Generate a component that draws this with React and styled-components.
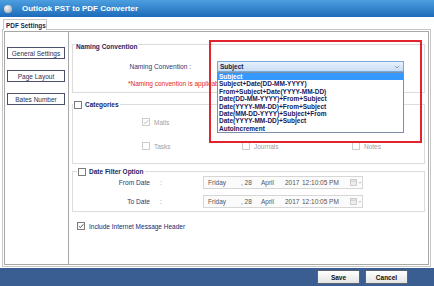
import React from 'react';
import styled, { createGlobalStyle } from 'styled-components';

const Global = createGlobalStyle`
  html, body { margin: 0; padding: 0; background: #fff; }
  body { font-family: "Liberation Sans", Arial, sans-serif; }
  * { box-sizing: border-box; }
`;

const Window = styled.div`
  position: relative;
  width: 434px;
  height: 286px;
  display: flex;
  flex-direction: column;
  overflow: hidden;
  background: #fff;
`;

const TitleBar = styled.div`
  height: 17px;
  flex: none;
  display: flex;
  align-items: center;
  gap: 10px;
  padding-left: 4px;
  background: linear-gradient(#4c9fe0, #1d6bb9);
  color: #fff;
  font-weight: bold;
  font-size: 8px;
`;

const AppIcon = styled.span`
  width: 8px;
  height: 8px;
  border-radius: 50%;
  background: radial-gradient(circle at 35% 35%, #f4f4f4, #9aa4ae);
`;

const Body = styled.div`
  flex: 1;
  display: flex;
  flex-direction: column;
  padding: 2px 3px 1px 2px;
`;

const TabStrip = styled.div`
  display: flex;
  padding-left: 1px;
  height: 11px;
  position: relative;
  z-index: 1;
  margin-bottom: -1px;
`;

const Tab = styled.div`
  width: 44px;
  height: 11px;
  border: 1px solid #c6c6c6;
  border-bottom: none;
  background: #fff;
  font-size: 6.4px;
  font-weight: bold;
  color: #1c2560;
  display: flex;
  align-items: center;
  padding-left: 2px;
`;

const TabPage = styled.div`
  flex: 1;
  border: 1px solid #c6c6c6;
  padding: 1px;
  display: flex;
`;

const Panel = styled.div`
  flex: 1;
  border: 1px solid #a8a8a8;
  display: flex;
`;

const Sidebar = styled.div`
  width: 64px;
  border-right: 1px solid #a8a8a8;
  display: flex;
  flex-direction: column;
  gap: 11px;
  padding: 15px 0 0 2px;
`;

const SideButton = styled.div`
  width: 58px;
  height: 12px;
  border: 1px solid #4a4f6a;
  background: #fff;
  font-size: 6.5px;
  color: #2c3050;
  display: flex;
  align-items: center;
  justify-content: center;
`;

const Content = styled.div`
  flex: 1;
  display: flex;
  flex-direction: column;
  padding: 8px 3px 0 3px;
`;

const Group = styled.fieldset`
  margin: ${p => p.$mt}px 0 0 0;
  padding: ${p => p.$pt}px 0 ${p => p.$pb}px 0;
  border: 1px solid #dcdcdc;
  min-width: 0;
`;

const Legend = styled.legend`
  padding: 0 1px;
  margin-left: ${p => p.$ml}px;
  height: 8px;
  line-height: 8px;
`;

const LegendInner = styled.span`
  display: inline-flex;
  align-items: center;
  gap: ${p => p.$gap || 0}px;
  height: 8px;
  font-size: 6.5px;
  font-weight: bold;
  color: #1d2566;
`;

const NamingRow = styled.div`
  display: flex;
  align-items: center;
  height: 11px;
  padding-left: 54px;
  gap: 26px;
`;

const FieldLabel = styled.span`
  width: ${p => p.$w}px;
  text-align: right;
  font-size: 6.6px;
  color: #2f3570;
  white-space: nowrap;
`;

const SelectWrap = styled.div`
  position: relative;
  width: 187px;
  height: 11px;
`;

const SelectBox = styled.div`
  height: 11px;
  border: 1px solid #7ba8da;
  background: linear-gradient(#e7f1fc, #c7ddf5);
  display: flex;
  align-items: center;
  justify-content: space-between;
  padding: 0 3px 0 2px;
  font-size: 6.5px;
  font-weight: bold;
  color: #18204e;
`;

const DropList = styled.ul`
  position: absolute;
  top: 100%;
  left: 0;
  width: 187px;
  margin: 0;
  padding: 0;
  list-style: none;
  background: #fff;
  border: 1px solid #7d90ab;
  z-index: 5;
`;

const DropItem = styled.li`
  height: 7.4px;
  line-height: 7.4px;
  padding-left: 1px;
  font-size: 6.5px;
  font-weight: bold;
  white-space: nowrap;
  color: ${p => (p.$active ? '#fff' : '#16205a')};
  background: ${p => (p.$active ? '#3399ff' : 'transparent')};
`;

const Note = styled.div`
  margin-top: 8px;
  height: 8px;
  line-height: 8px;
  padding-left: 55px;
  font-size: 6.5px;
  color: #e2231d;
  white-space: nowrap;
`;

const CatGrid = styled.div`
  display: grid;
  grid-template-columns: 100px 110px 1fr;
  grid-auto-rows: 8px;
  row-gap: 16px;
  padding-left: 69px;
`;

const CatItem = styled.div`
  grid-column: ${p => p.$col};
  grid-row: ${p => p.$row};
  display: flex;
  align-items: center;
  gap: 4px;
  font-size: 6.5px;
  color: #a0a0a0;
`;

const Box = styled.span`
  width: 8px;
  height: 8px;
  flex: none;
  border: 1px solid ${p => (p.$disabled ? '#cdcdcd' : '#7c7c7c')};
  background: #fff;
  display: inline-flex;
  align-items: center;
  justify-content: center;
`;

const DateRows = styled.div`
  display: flex;
  flex-direction: column;
  gap: 6px;
`;

const DateRow = styled.div`
  display: grid;
  grid-template-columns: 40px 53px 160px;
  align-items: center;
  height: 13px;
  padding-left: 37px;
`;

const Colon = styled.span`
  padding-left: 10px;
  font-size: 6.5px;
  color: #8a8aa0;
`;

const DateBox = styled.div`
  height: 13px;
  border: 1px solid #d6d6d6;
  background: #fbfbfb;
  display: flex;
  align-items: center;
  padding-left: 4px;
  font-size: 6.5px;
  color: #555;
`;

const DateSeg = styled.span`
  width: ${p => p.$w}px;
  flex: none;
  white-space: nowrap;
`;

const IncludeRow = styled.div`
  margin-top: 10px;
  height: 8px;
  padding-left: 5px;
  display: flex;
  align-items: center;
  gap: 4px;
  font-size: 6.5px;
  color: #1d2566;
`;

const Footer = styled.div`
  height: 18px;
  flex: none;
  background: #3a5e91;
  display: flex;
  align-items: center;
  justify-content: flex-end;
  gap: 5px;
  padding-right: 26px;
`;

const FootButton = styled.div`
  width: 43px;
  height: 14px;
  border: 1px solid #5d6470;
  background: linear-gradient(#ffffff, #e4e4e4);
  font-size: 6.5px;
  font-weight: bold;
  color: #111;
  display: flex;
  align-items: center;
  justify-content: center;
`;

const RedBox = styled.div`
  position: absolute;
  left: 209px;
  top: 40px;
  width: 213px;
  height: 103px;
  border: 2px solid #e2242e;
  pointer-events: none;
  z-index: 6;
`;

const Check = ({ color }) => (
  <svg width="6" height="6" viewBox="0 0 6 6">
    <path d="M0.8 3.1 L2.4 4.6 L5.3 1.2" fill="none" stroke={color} strokeWidth="0.9" />
  </svg>
);

const CheckBox = ({ checked, disabled }) => (
  <Box $disabled={disabled}>{checked && <Check color={disabled ? '#b5b5b5' : '#4a4a4a'} />}</Box>
);

const Chevron = () => (
  <svg width="6" height="4" viewBox="0 0 6 4">
    <path d="M0.8 0.8 L3 3 L5.2 0.8" fill="none" stroke="#8a8a8a" strokeWidth="0.8" />
  </svg>
);

const CalIcon = () => (
  <svg width="12" height="7" viewBox="0 0 12 7">
    <rect x="0.5" y="0.5" width="6" height="6" fill="#eee" stroke="#c4c4c4" strokeWidth="0.8" />
    <line x1="0.5" y1="2.2" x2="6.5" y2="2.2" stroke="#c4c4c4" strokeWidth="0.8" />
    <path d="M8.6 3 L9.8 4.3 L11 3" fill="none" stroke="#aaa" strokeWidth="0.7" />
  </svg>
);

const options = [
  'Subject',
  'Subject+Date(DD-MM-YYYY)',
  'From+Subject+Date(YYYY-MM-DD)',
  'Date(DD-MM-YYYY)+From+Subject',
  'Date(YYYY-MM-DD)+From+Subject',
  'Date(MM-DD-YYYY)+Subject+From',
  'Date(YYYY-MM-DD)+Subject',
  'AutoIncrement',
];

const DateValue = () => (
  <DateBox>
    <DateSeg $w={33}>Friday</DateSeg>
    <DateSeg $w={20}>, 28</DateSeg>
    <DateSeg $w={24}>April</DateSeg>
    <DateSeg $w={17}>2017</DateSeg>
    <DateSeg $w={48}>12:10:05 PM</DateSeg>
    <CalIcon />
  </DateBox>
);

export default function App() {
  return (
    <>
      <Global />
      <Window>
        <TitleBar>
          <AppIcon />
          Outlook PST to PDF Converter
        </TitleBar>
        <Body>
          <TabStrip>
            <Tab>PDF Settings</Tab>
          </TabStrip>
          <TabPage>
            <Panel>
              <Sidebar>
                <SideButton>General Settings</SideButton>
                <SideButton>Page Layout</SideButton>
                <SideButton>Bates Number</SideButton>
              </Sidebar>
              <Content>
                <Group $mt={0} $pt={13} $pb={4}>
                  <Legend $ml={2}>
                    <LegendInner>Naming Convention</LegendInner>
                  </Legend>
                  <NamingRow>
                    <FieldLabel $w={64}>Naming Convention :</FieldLabel>
                    <SelectWrap>
                      <SelectBox>
                        Subject
                        <Chevron />
                      </SelectBox>
                      <DropList>
                        {options.map((o, i) => (
                          <DropItem key={o} $active={i === 0}>{o}</DropItem>
                        ))}
                      </DropList>
                    </SelectWrap>
                  </NamingRow>
                  <Note>*Naming convention is applicable</Note>
                </Group>

                <Group $mt={7} $pt={10} $pb={13}>
                  <Legend $ml={0}>
                    <LegendInner $gap={3}>
                      <CheckBox />
                      Categories
                    </LegendInner>
                  </Legend>
                  <CatGrid>
                    <CatItem $col={1} $row={1}><CheckBox checked disabled />Mails</CatItem>
                    <CatItem $col={1} $row={2}><CheckBox disabled />Tasks</CatItem>
                    <CatItem $col={2} $row={2}><CheckBox disabled />Journals</CatItem>
                    <CatItem $col={3} $row={2}><CheckBox disabled />Notes</CatItem>
                  </CatGrid>
                </Group>

                <Group $mt={3} $pt={1} $pb={3}>
                  <Legend $ml={4}>
                    <LegendInner $gap={3}>
                      <CheckBox />
                      Date Filter Option
                    </LegendInner>
                  </Legend>
                  <DateRows>
                    <DateRow>
                      <FieldLabel $w={40}>From Date</FieldLabel>
                      <Colon>:</Colon>
                      <DateValue />
                    </DateRow>
                    <DateRow>
                      <FieldLabel $w={40}>To Date</FieldLabel>
                      <Colon>:</Colon>
                      <DateValue />
                    </DateRow>
                  </DateRows>
                </Group>

                <IncludeRow>
                  <CheckBox checked />
                  Include Internet Message Header
                </IncludeRow>
              </Content>
            </Panel>
          </TabPage>
        </Body>
        <Footer>
          <FootButton>Save</FootButton>
          <FootButton>Cancel</FootButton>
        </Footer>
        <RedBox />
      </Window>
    </>
  );
}
